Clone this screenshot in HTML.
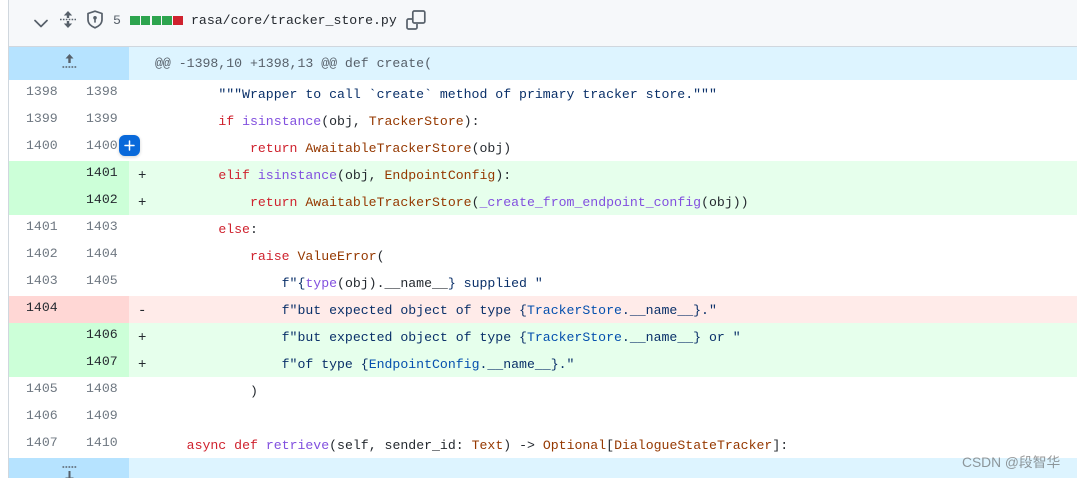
<!DOCTYPE html>
<html><head><meta charset="utf-8">
<style>
html,body{margin:0;padding:0;background:#fff}
body{width:1077px;height:478px;overflow:hidden;position:relative;font-family:"Liberation Mono",monospace;font-size:13.2px;color:#24292f}
.a{position:absolute}
.hd{left:9px;top:0;width:1068px;height:46px;background:#f6f8fa;border-bottom:1px solid #d0d7de}
.lb{left:8px;top:0;width:1px;height:478px;background:#d0d7de}
.row{position:absolute;left:9px;width:1068px;height:27px}
.g{position:absolute;left:0;top:0;width:120px;height:27px}
.n{position:absolute;top:4px;line-height:16px;width:32px;color:#6e7781;white-space:pre}
.n1{left:17px}.n2{left:77px}
.c{position:absolute;top:7px;line-height:16px;white-space:pre;left:146px}
.s{position:absolute;top:7px;line-height:16px;left:129px;font-size:14px}
.add{background:#e6ffec}.add .g{background:#ccffd8}.add .n{color:#24292f}
.del{background:#ffebe9}.del .g{background:#ffd7d5}.del .n{color:#24292f}
.hk{background:#ddf4ff}.hk .g{background:#b6e3ff}
k{color:#cf222e}f{color:#8250df}t{color:#953800}b{color:#0550ae;font-weight:normal}
</style></head><body>
<div class="a hd"></div>
<div class="a lb"></div>

<svg class="a" style="left:32px;top:14px" width="16" height="16" viewBox="0 0 16 16"><path d="M3 6.500 9 12.500 15 6.500" fill="none" stroke="#57606a" stroke-width="1.700" stroke-linecap="round" stroke-linejoin="round"/></svg>
<svg class="a" style="left:59px;top:10px" width="18" height="19" viewBox="0 0 18 19"><path d="M9 1 4.800 5.500h3v2.500h2.400V5.500h3zM9 18l-4.200-4.500h3V11h2.400v2.500h3z" fill="#57606a"/><path d="M1 9.500h16" stroke="#57606a" stroke-width="1.400" stroke-dasharray="1.600 1.300"/></svg>
<svg class="a" style="left:86px;top:10px" width="18" height="19" viewBox="0 0 18 19"><path d="M9 1.200 2 3.500v6.300c0 3.800 3.200 6.600 7 8 3.800-1.400 7-4.200 7-8V3.500z" fill="none" stroke="#57606a" stroke-width="1.700" stroke-linejoin="round"/><circle cx="9" cy="7.800" r="1.800" fill="#57606a"/><path d="M9 8v4" stroke="#57606a" stroke-width="1.600" stroke-linecap="round"/></svg>
<div class="a" style="left:113px;top:13px;line-height:16px;color:#57606a">5</div>
<div class="a" style="left:130px;top:16px;width:10px;height:9px;background:#2da44e"></div>
<div class="a" style="left:141px;top:16px;width:9px;height:9px;background:#2da44e"></div>
<div class="a" style="left:152px;top:16px;width:9px;height:9px;background:#2da44e"></div>
<div class="a" style="left:162px;top:16px;width:10px;height:9px;background:#2da44e"></div>
<div class="a" style="left:173px;top:16px;width:10px;height:9px;background:#cf222e"></div>
<div class="a" style="left:191px;top:13px;line-height:16px;white-space:pre">rasa/core/tracker_store.py</div>
<svg class="a" style="left:405px;top:9px" width="22" height="22" viewBox="0 0 22 22"><path d="M7 10H3.500A1.500 1.500 0 0 0 2 11.500v7A1.500 1.500 0 0 0 3.500 20h7a1.500 1.500 0 0 0 1.500-1.500V15" fill="none" stroke="#57606a" stroke-width="1.700"/><rect x="7.800" y="2" width="12" height="12" rx="1.500" fill="none" stroke="#57606a" stroke-width="1.700"/></svg>

<div class="row hk" style="top:47px;height:33px"><div class="g" style="height:33px"></div><div class="c" style="top:9px;color:#57606a">@@ -1398,10 +1398,13 @@ def create(</div></div>
<svg class="a" style="left:61px;top:53px" width="18" height="16" viewBox="0 0 18 16"><path d="M8.500 1 4.500 5.500h2.800V10h2.400V5.500h2.800z" fill="#57606a"/><path d="M1.500 14h15" stroke="#57606a" stroke-width="1.400" stroke-dasharray="1.700 1.300"/></svg>

<div class="row" style="top:80px"><div class="n n1">1398</div><div class="n n2">1398</div><div class="c">        <span style="color:#0a3069">"""Wrapper to call `create` method of primary tracker store."""</span></div></div>
<div class="row" style="top:107px"><div class="n n1">1399</div><div class="n n2">1399</div><div class="c">        <k>if</k> <f>isinstance</f>(obj, <t>TrackerStore</t>):</div></div>
<div class="row" style="top:134px"><div class="n n1">1400</div><div class="n n2">1400</div><div class="c">            <k>return</k> <t>AwaitableTrackerStore</t>(obj)</div></div>
<div class="row add" style="top:161px"><div class="g"></div><div class="n n2">1401</div><div class="s">+</div><div class="c">        <k>elif</k> <f>isinstance</f>(obj, <t>EndpointConfig</t>):</div></div>
<div class="row add" style="top:188px"><div class="g"></div><div class="n n2">1402</div><div class="s">+</div><div class="c">            <k>return</k> <t>AwaitableTrackerStore</t>(<f>_create_from_endpoint_config</f>(obj))</div></div>
<div class="row" style="top:215px"><div class="n n1">1401</div><div class="n n2">1403</div><div class="c">        <k>else</k>:</div></div>
<div class="row" style="top:242px"><div class="n n1">1402</div><div class="n n2">1404</div><div class="c">            <k>raise</k> <t>ValueError</t>(</div></div>
<div class="row" style="top:269px"><div class="n n1">1403</div><div class="n n2">1405</div><div class="c">                <span style="color:#0a3069">f"{</span><f>type</f>(obj).__name__<span style="color:#0a3069">} supplied "</span></div></div>
<div class="row del" style="top:296px"><div class="g"></div><div class="n n1">1404</div><div class="s">-</div><div class="c">                <span style="color:#0a3069">f"but expected object of type {</span><b>TrackerStore</b><span style="color:#0a3069">.__name__}."</span></div></div>
<div class="row add" style="top:323px"><div class="g"></div><div class="n n2">1406</div><div class="s">+</div><div class="c">                <span style="color:#0a3069">f"but expected object of type {</span><b>TrackerStore</b><span style="color:#0a3069">.__name__} or "</span></div></div>
<div class="row add" style="top:350px"><div class="g"></div><div class="n n2">1407</div><div class="s">+</div><div class="c">                <span style="color:#0a3069">f"of type {</span><b>EndpointConfig</b><span style="color:#0a3069">.__name__}."</span></div></div>
<div class="row" style="top:377px"><div class="n n1">1405</div><div class="n n2">1408</div><div class="c">            )</div></div>
<div class="row" style="top:404px"><div class="n n1">1406</div><div class="n n2">1409</div></div>
<div class="row" style="top:431px"><div class="n n1">1407</div><div class="n n2">1410</div><div class="c">    <k>async</k> <k>def</k> <f>retrieve</f>(self, sender_id: <t>Text</t>) -&gt; <t>Optional</t>[<t>DialogueStateTracker</t>]:</div></div>
<div class="row hk" style="top:458px;height:20px"><div class="g" style="height:20px"></div></div>
<svg class="a" style="left:61px;top:464px" width="18" height="14" viewBox="0 0 18 14"><path d="M1.500 3h15" stroke="#57606a" stroke-width="1.400" stroke-dasharray="1.700 1.300"/><path d="M7.500 7h2v6.500h3V14H4.500v-.5h3z" fill="#57606a"/></svg>

<div class="a" style="left:119px;top:135px;width:21px;height:21px;border-radius:6px;background:#0969da;box-shadow:0 1px 3px rgba(27,31,36,.2)"></div>
<svg class="a" style="left:124px;top:140px" width="11" height="11" viewBox="0 0 11 11"><path d="M5.500 1v9M1 5.500h9" stroke="#fff" stroke-width="1.500" stroke-linecap="round"/></svg>

<div class="a" style="left:962px;top:454px;font-family:'Liberation Sans','Noto Sans CJK SC',sans-serif;font-size:13.800px;line-height:18px;color:rgba(90,90,90,.62);white-space:pre">CSDN @段智华</div>
</body></html>
